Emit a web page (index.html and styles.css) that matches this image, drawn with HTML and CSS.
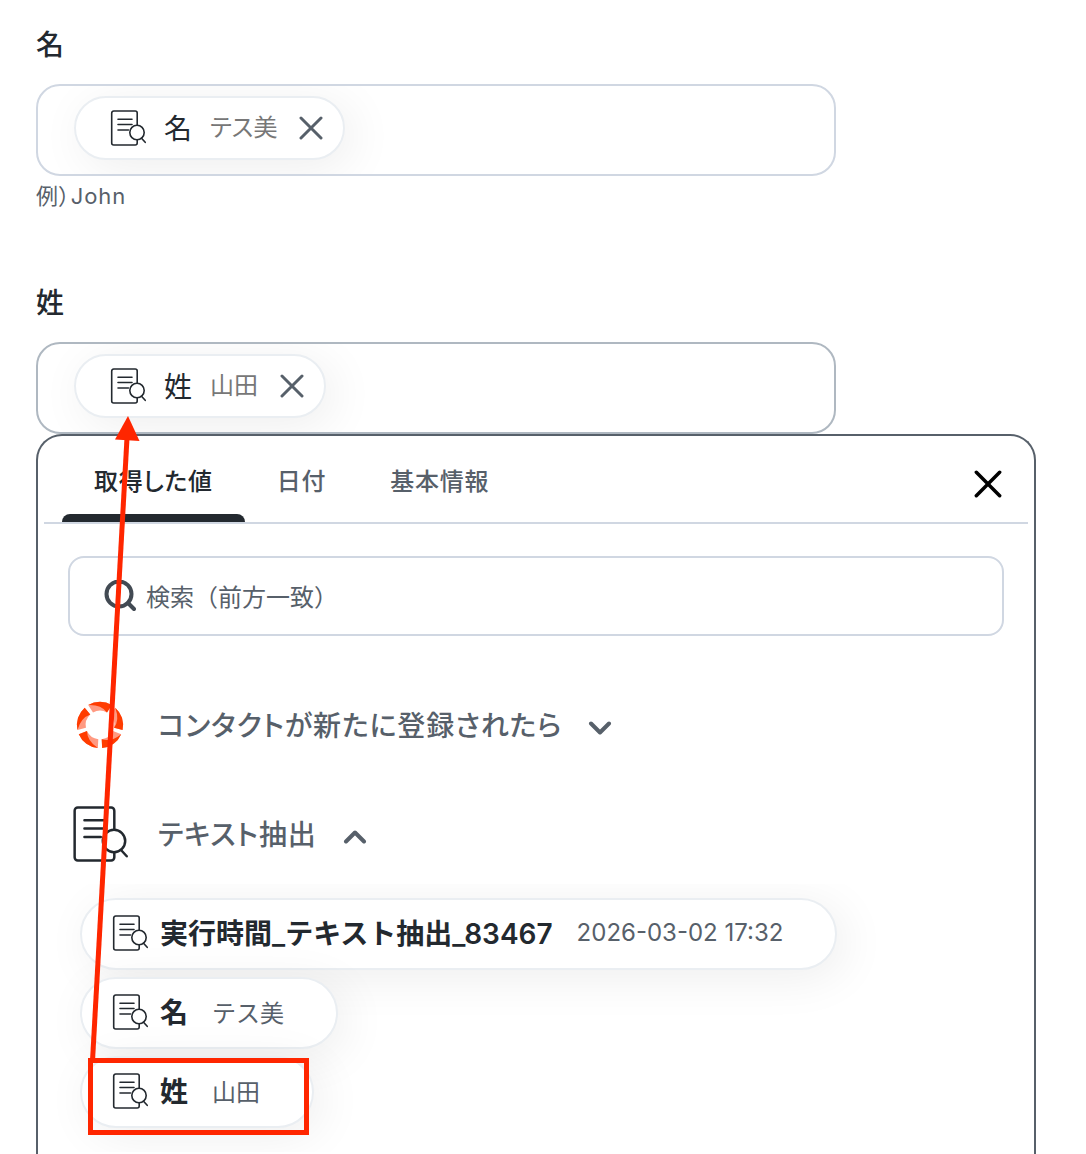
FILE: index.html
```
<!DOCTYPE html>
<html lang="ja">
<head>
    <meta charset="UTF-8">
    <meta name="viewport" content="width=device-width, initial-scale=1.0">
    <title>コンタクト登録</title>
    <link rel="stylesheet" href="styles.css">
</head>
<body>
    <!-- Shared icons -->
    <svg class="sprite" aria-hidden="true">
        <symbol id="icon-extract" viewBox="0 0 36 36">
            <g fill="none" stroke="currentColor" stroke-width="1.6" stroke-linecap="round" stroke-linejoin="round">
                <path d="M27.2 15V3a2 2 0 0 0-2-2H3.7a2 2 0 0 0-2 2v30a2 2 0 0 0 2 2h21.5a2 2 0 0 0 2-2v-3.2"/>
                <path d="M8 9.2h14M8 14.5h14M8 20h10.5"/>
                <circle cx="27" cy="22.5" r="7.2"/>
                <path d="M31.5 28.3l3.7 4"/>
            </g>
        </symbol>
        <symbol id="icon-close" viewBox="0 0 24 24">
            <path d="M2 2l20 20M22 2l-20 20" fill="none" stroke="currentColor" stroke-linecap="round"/>
        </symbol>
        <symbol id="icon-chevron" viewBox="0 0 24 14">
            <path d="M3 2.5l9 9 9-9" fill="none" stroke="currentColor" stroke-width="4" stroke-linecap="round" stroke-linejoin="round"/>
        </symbol>
        <symbol id="logo-part" viewBox="-28 -28 56 56">
            <path fill="#ff9a82" d="M-11.8-19.9A23.2 23.2 0 0 1 11.8-19.9L7-12.5A14.3 14.3 0 0 0-7-12.5Z"/>
            <path fill="#ff3c00" d="M-11.8-19.9A23.2 23.2 0 0 1 11.8-19.9L7-12.5Q1-20.500-11.8-19.9Z"/>
        </symbol>
    </svg>

    <main class="page">
        <div class="field">
            <label class="field-label" for="first-name">名</label>
            <div class="field-box">
                <span class="chip">
                    <svg class="icon"><use href="#icon-extract"/></svg>
                    <span class="chip-name">名</span>
                    <span class="chip-value">テス美</span>
                    <button type="button" class="chip-remove" aria-label="名を削除"><svg><use href="#icon-close"/></svg></button>
                </span>
                <input type="text" id="first-name" class="field-input">
            </div>
            <p class="field-help">例）John</p>
        </div>

        <div class="field">
            <label class="field-label" for="last-name">姓</label>
            <div class="field-box active">
                <span class="chip">
                    <svg class="icon"><use href="#icon-extract"/></svg>
                    <span class="chip-name">姓</span>
                    <span class="chip-value">山田</span>
                    <button type="button" class="chip-remove" aria-label="姓を削除"><svg><use href="#icon-close"/></svg></button>
                </span>
                <input type="text" id="last-name" class="field-input">
            </div>
        </div>

        <section class="picker">
            <div class="tabs">
                <button type="button" class="tab selected">取得した値</button>
                <button type="button" class="tab">日付</button>
                <button type="button" class="tab">基本情報</button>
                <button type="button" class="picker-close" aria-label="閉じる"><svg><use href="#icon-close"/></svg></button>
            </div>

            <label class="search">
                <svg class="search-icon" viewBox="0 0 32 32" fill="none" stroke="currentColor" stroke-width="4" stroke-linecap="round">
                    <circle cx="15" cy="14" r="12.5"/>
                    <path d="M24 23l6 6"/>
                </svg>
                <input type="search" placeholder="検索（前方一致）" aria-label="検索">
            </label>

            <button type="button" class="group" aria-expanded="false">
                <svg class="group-icon" viewBox="-28 -28 56 56">
                    <use href="#logo-part" x="-28" y="-28" width="56" height="56"/>
                    <use href="#logo-part" x="-28" y="-28" width="56" height="56" transform="rotate(72)"/>
                    <use href="#logo-part" x="-28" y="-28" width="56" height="56" transform="rotate(144)"/>
                    <use href="#logo-part" x="-28" y="-28" width="56" height="56" transform="rotate(216)"/>
                    <use href="#logo-part" x="-28" y="-28" width="56" height="56" transform="rotate(288)"/>
                </svg>
                <span>コンタクトが新たに登録されたら</span>
                <svg class="chevron"><use href="#icon-chevron"/></svg>
            </button>

            <button type="button" class="group" aria-expanded="true">
                <svg class="group-icon"><use href="#icon-extract"/></svg>
                <span>テキスト抽出</span>
                <svg class="chevron"><use href="#icon-chevron"/></svg>
            </button>

            <div class="values">
                <button type="button" class="value">
                    <svg class="icon"><use href="#icon-extract"/></svg>
                    <span class="value-name">実行時間_テキスト抽出_83467</span>
                    <span class="value-text">2026-03-02 17:32</span>
                </button>
                <button type="button" class="value">
                    <svg class="icon"><use href="#icon-extract"/></svg>
                    <span class="value-name">名</span>
                    <span class="value-text">テス美</span>
                </button>
                <button type="button" class="value">
                    <svg class="icon"><use href="#icon-extract"/></svg>
                    <span class="value-name">姓</span>
                    <span class="value-text">山田</span>
                </button>
            </div>
        </section>
    </main>

    <!-- Arrow from the picked value to the field -->
    <svg class="annotation" width="320" height="1140" aria-hidden="true">
        <rect x="90.5" y="1060.5" width="216" height="72" fill="none" stroke="#ff2600" stroke-width="5"/>
        <path d="M92.5 1061L127 438" stroke="#ff2600" stroke-width="5"/>
        <path d="M128 416L139.500 441L115 439.500Z" fill="#ff2600"/>
    </svg>
</body>
</html>
```
FILE: styles.css
```
* {
    box-sizing: border-box;
}
body {
    margin: 0;
    background-color: #fff;
    color: #23292f;
    font-family: Inter, "Noto Sans CJK JP", sans-serif;
    font-size: 24px;
}
button, input {
    font: inherit;
    color: inherit;
    background: none;
    border: none;
    padding: 0;
    margin: 0;
}
button {
    cursor: pointer;
}
svg {
    display: block;
    flex: none;
}
.sprite {
    position: absolute;
    width: 0;
    height: 0;
}
.page {
    display: flex;
    flex-direction: column;
    min-height: 100vh;
    padding: 24px 50px 0 36px;
}

/* Fields */
.field {
    width: 100%;
    max-width: 800px;
}
.field + .field {
    margin-top: 66px;
}
.field-label {
    display: block;
    margin-bottom: 18px;
    font-size: 28px;
    font-weight: 500;
    line-height: 42px;
}
.field-box {
    display: flex;
    align-items: center;
    height: 92px;
    padding: 0 36px 4px;
    border: 2px solid #d0d7e2;
    border-radius: 24px;
    overflow: hidden;
}
.field-box.active {
    border-color: #afb8c1;
}
.field-input {
    flex: 1;
    min-width: 0;
    outline: none;
}
.field-help {
    margin: 0;
    color: #57606a;
    font-size: 22px;
    line-height: 40px;
    letter-spacing: 0.04em;
    font-feature-settings: "palt";
}
.chip {
    display: flex;
    align-items: center;
    height: 64px;
    padding: 0 20px 0 34px;
    border: 2px solid #eaeef2;
    border-radius: 32px;
    background-color: #fff;
    box-shadow: 8px 8px 48px rgba(0, 0, 0, 0.07);
    white-space: nowrap;
}
.chip-name {
    margin: 0 18px;
    padding-bottom: 2px;
    font-size: 28px;
}
.chip-value {
    margin-right: 22px;
    padding-bottom: 6px;
    color: #777;
    font-feature-settings: "palt";
}
.chip-remove {
    color: #57606a;
    stroke-width: 3;
}
.chip-remove svg {
    width: 24px;
    height: 24px;
}
.icon {
    width: 36px;
    height: 36px;
    color: #23292f;
}

/* Value picker */
.picker {
    flex: 1;
    padding-bottom: 12px;
    border: 2px solid #57606a;
    border-bottom: none;
    border-radius: 26px 26px 0 0;
    background-color: #fff;
}
.tabs {
    display: flex;
    height: 88px;
    margin: 0 6px;
    padding: 0 26px 0 18px;
    border-bottom: 2px solid #d0d7e2;
}
.tab {
    position: relative;
    padding: 0 32px;
    color: #57606a;
    font-weight: 500;
    letter-spacing: 0.03em;
    font-feature-settings: "palt";
}
.tab.selected {
    color: #23292f;
}
.tab.selected::after {
    content: "";
    position: absolute;
    left: 0;
    right: 0;
    bottom: 0;
    height: 8px;
    border-radius: 8px 8px 0 0;
    background-color: #23292f;
}
.picker-close {
    margin-left: auto;
    padding-top: 10px;
    color: #000;
    stroke-width: 3;
}
.picker-close svg {
    width: 28px;
    height: 28px;
    overflow: visible;
}
.search {
    display: flex;
    align-items: center;
    gap: 10px;
    height: 80px;
    margin: 32px 30px 60px;
    padding: 0 34px;
    border: 2px solid #d0d7e2;
    border-radius: 16px;
    color: #57606a;
}
.search-icon {
    width: 32px;
    height: 32px;
    color: #424a53;
}
.search input {
    flex: 1;
    min-width: 0;
    padding-top: 2px;
    outline: none;
}
.search input::placeholder {
    color: #57606a;
    opacity: 1;
}
.group {
    display: flex;
    align-items: center;
    height: 58px;
    margin-left: 34px;
    color: #57606a;
    font-size: 28px;
    font-weight: 500;
    letter-spacing: 0.03em;
    font-feature-settings: "palt";
    white-space: nowrap;
}
.group + .group {
    margin-top: 51px;
}
.group span {
    margin: 0 26px 0 30px;
    padding-bottom: 2px;
}
.group-icon {
    width: 56px;
    height: 56px;
    color: #23292f;
}
.chevron {
    width: 24px;
    height: 14px;
    margin-top: 6px;
}
.group[aria-expanded="true"] .chevron {
    transform: rotate(180deg);
}
.values {
    display: flex;
    flex-direction: column;
    align-items: flex-start;
    gap: 7px;
    margin-top: 21px;
    padding: 14px 42px 24px;
    overflow: hidden;
}
.value {
    display: flex;
    align-items: center;
    height: 72px;
    padding: 0 52px 2px 30px;
    border: 2px solid #eaeef2;
    border-radius: 36px;
    background-color: #fff;
    box-shadow: 8px 8px 48px rgba(0, 0, 0, 0.07);
    white-space: nowrap;
}
.value-name {
    margin: 0 24px 0 12px;
    padding-bottom: 2px;
    font-size: 28px;
    font-weight: 600;
}
.value-text {
    padding-bottom: 2px;
    color: #57606a;
}

.annotation {
    position: absolute;
    top: 0;
    left: 0;
    pointer-events: none;
}
```
